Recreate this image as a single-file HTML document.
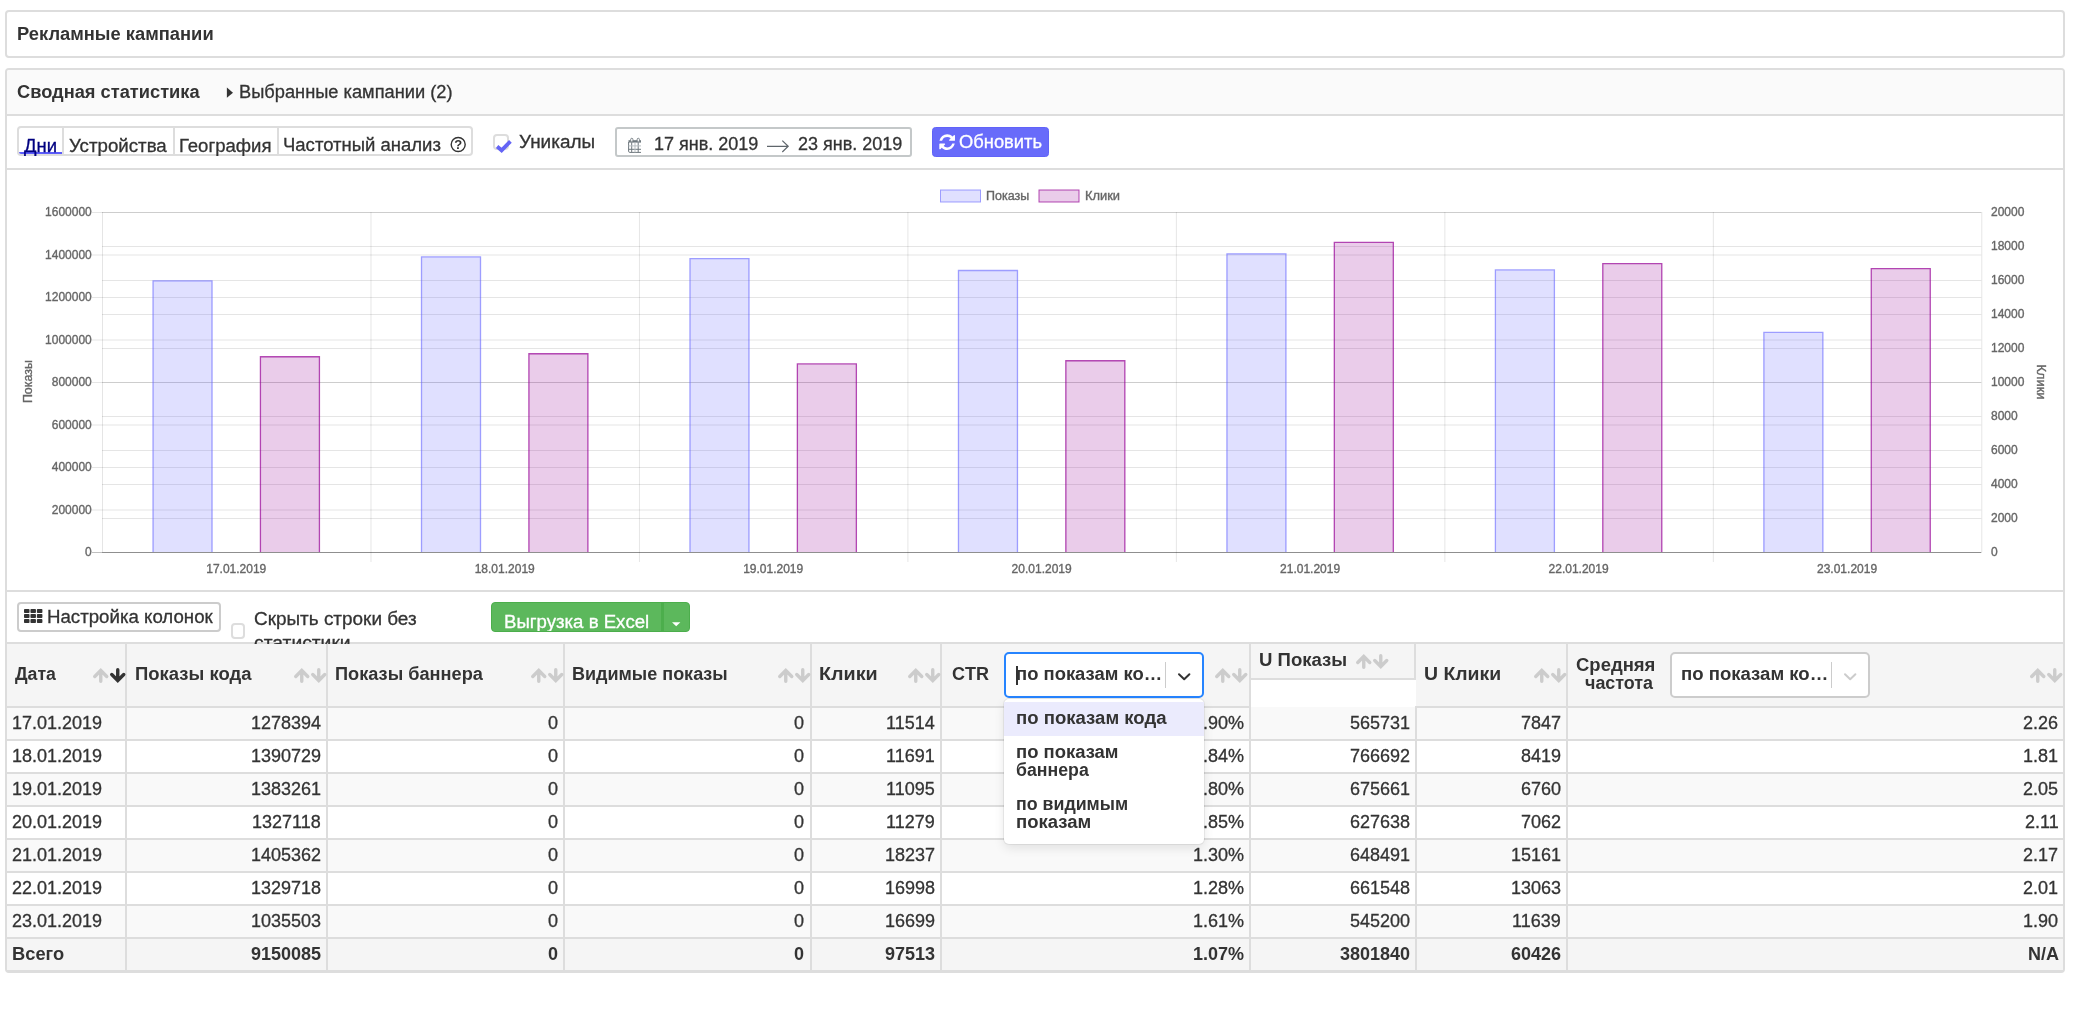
<!DOCTYPE html>
<html lang="ru">
<head>
<meta charset="utf-8">
<title>Рекламные кампании</title>
<style>
html,body{margin:0;padding:0;background:#fff;}
body{width:2080px;height:1024px;position:relative;overflow:hidden;font-family:"Liberation Sans", sans-serif;font-size:18px;color:#333;}
#page{position:absolute;left:0;top:0;width:2080px;height:1024px;overflow:hidden;will-change:transform;}
.b,.a{position:absolute;box-sizing:content-box;}
header,section,nav,figure,form{display:block;margin:0;padding:0;}
.t{position:absolute;white-space:nowrap;-webkit-text-stroke:0.3px;transform-origin:0 0;}
svg{display:block;overflow:visible;}
.ch text{stroke:#666;stroke-width:0.35px;}
</style>
</head>
<body>
<div id="page">
<header aria-label="Рекламные кампании">
<div class="b" style="left:5px;top:10px;width:2056px;height:44px;border:2px solid #ddd;border-radius:4px;background:#fff;"></div>
<span class="t" style="left:17.18px;top:25.00px;font-size:18px;line-height:18px;font-weight:bold;-webkit-text-stroke:0;transform:scaleX(1.0188);">Рекламные кампании</span>
</header>
<section aria-label="Сводная статистика">
<div class="b" style="left:5px;top:68px;width:2056px;height:901px;border:2px solid #ddd;border-radius:4px;background:#fff;"></div>
<div class="b" style="left:7px;top:70px;width:2056px;height:44px;background:#fafafa;border-bottom:2px solid #ddd;border-radius:2px 2px 0 0;"></div>
<span class="t" style="left:16.73px;top:82.50px;font-size:18px;line-height:18px;font-weight:bold;-webkit-text-stroke:0;transform:scaleX(1.0143);">Сводная статистика</span>
<svg class="a" style="left:226px;top:87px" width="8" height="12" viewBox="0 0 8 12"><path d="M0.9 0.6 L7 5.65 L0.9 10.7 Z" fill="#333"/></svg>
<span class="t" style="left:239.39px;top:83.00px;font-size:18px;line-height:18px;transform:scaleX(1.0142);">Выбранные кампании (2)</span>
<nav aria-label="Разрезы статистики">
<div class="b" style="left:7px;top:168px;width:2056px;height:2px;background:#ddd;"></div>
<div class="b" style="left:17px;top:126px;width:452px;height:26px;border:2px solid #ddd;border-radius:4px;"></div>
<div class="b" style="left:62px;top:128px;width:2px;height:26px;background:#ddd;"></div>
<div class="b" style="left:173px;top:128px;width:2px;height:26px;background:#ddd;"></div>
<div class="b" style="left:277px;top:128px;width:2px;height:26px;background:#ddd;"></div>
<div class="b" style="left:19px;top:152px;width:43px;height:2px;background:#5c5cfa;border-radius:0 0 0 2px;"></div>
<div class="b" style="left:17px;top:126px;width:456px;height:30px;overflow:hidden;"><span class="t" style="left:7.40px;top:11.00px;font-size:18px;line-height:18px;color:#000080;transform:scaleX(1.0253);">Дни</span></div>
<div class="b" style="left:17px;top:126px;width:456px;height:30px;overflow:hidden;"><span class="t" style="left:52.19px;top:11.00px;font-size:18px;line-height:18px;transform:scaleX(1.0382);">Устройства</span></div>
<div class="b" style="left:17px;top:126px;width:456px;height:30px;overflow:hidden;"><span class="t" style="left:161.97px;top:11.00px;font-size:18px;line-height:18px;transform:scaleX(1.0295);">География</span></div>
<div class="b" style="left:17px;top:126px;width:456px;height:30px;overflow:hidden;"><span class="t" style="left:265.72px;top:9.60px;font-size:18px;line-height:18px;transform:scaleX(1.0280);">Частотный анализ</span></div>
<svg class="a" style="left:450px;top:136px" width="17" height="17" viewBox="0 0 17 17"><circle cx="8.2" cy="8.5" r="7" fill="none" stroke="#333" stroke-width="1.4"/><text x="8.3" y="13.2" text-anchor="middle" font-family="Liberation Sans, sans-serif" font-weight="bold" font-size="13" fill="#333">?</text></svg>
</nav>
<form aria-label="Параметры">
<div class="b" style="left:493px;top:134px;width:11.5px;height:11.5px;border:2px solid #ddd;border-radius:4px;background:#fff;"></div>
<svg class="a" style="left:494.2px;top:137.5px" width="20" height="16" viewBox="0 0 20 16"><path d="M3.1 8.5 L7.6 12.3 L16.4 3.3" fill="none" stroke="#6464f5" stroke-width="3.8" stroke-linejoin="miter"/></svg>
<span class="t" style="left:519.18px;top:132.50px;font-size:18px;line-height:18px;transform:scaleX(1.0511);">Уникалы</span>
<div class="b" style="left:615px;top:127px;width:293px;height:26px;border:2px solid #c4c8c9;border-radius:3px;background:#fff;"></div>
<svg class="a" style="left:628px;top:138px" width="13" height="15" viewBox="0 0 13 15">
<path d="M0.5 2.2 H13 V4.6 H0.5 Z" fill="#6f787e"/>
<rect x="2.7" y="0.3" width="2.2" height="3.6" rx="1" fill="#fff" stroke="#6f787e" stroke-width="0.9"/>
<rect x="9.2" y="0.3" width="2.2" height="3.6" rx="1" fill="#fff" stroke="#6f787e" stroke-width="0.9"/>
<path d="M0.6 4 V13.2 Q0.6 14.4 1.8 14.4 H13 M3.7 4.6 V14.4 M10.2 4.6 V14.4 M0.6 11.3 H13" fill="none" stroke="#6f787e" stroke-width="1"/>
<path d="M7 4.6 V14.4 M0.6 7.9 H13" fill="none" stroke="#b9bfc3" stroke-width="1"/>
</svg>
<span class="t" style="left:654.00px;top:135.00px;font-size:18px;line-height:18px;">17 янв. 2019</span>
<svg class="a" style="left:766px;top:139px" width="24" height="14" viewBox="0 0 24 14"><path d="M1 7.3 H22 M16.3 1.6 L22.2 7.3 L16.3 13" fill="none" stroke="#5f666b" stroke-width="1.2"/></svg>
<span class="t" style="left:798.00px;top:135.00px;font-size:18px;line-height:18px;">23 янв. 2019</span>
<div class="b" style="left:932px;top:127px;width:115px;height:28px;border:1px solid #6063f8;border-radius:3.5px;background:#686bfa;"></div>
<svg class="a" style="left:937.9px;top:132.8px" width="18.3" height="18.3" viewBox="0 0 1792 1792"><path d="M1639 1056q0 5-1 7-64 268-268 434.500t-478 166.500q-146 0-282.500-55t-243.500-157l-129 129q-19 19-45 19t-45-19-19-45v-448q0-26 19-45t45-19h448q26 0 45 19t19 45-19 45l-137 137q71 66 161 102t187 36q134 0 250-65t186-179q11-17 53-117 8-23 30-23h192q13 0 22.500 9.500t9.500 22.500zm25-800v448q0 26-19 45t-45 19h-448q-26 0-45-19t-19-45 19-45l138-138q-148-137-349-137-134 0-250 65t-186 179q-11 17-53 117-8 23-30 23h-199q-13 0-22.500-9.500t-9.500-22.500v-7q65-268 270-434.500t480-166.500q146 0 284 55.500t245 156.500l130-129q19-19 45-19t45 19 19 45z" fill="#fff"/></svg>
<span class="t" style="left:959.10px;top:133.40px;font-size:18px;line-height:18px;color:#fff;transform:scaleX(1.0186);">Обновить</span>
</form>
<figure aria-label="График показов и кликов">
<svg class="a ch" style="left:7px;top:170px" width="2056" height="420" viewBox="7 170 2056 420" font-family="Liberation Sans, sans-serif" font-size="12" fill="#666">
<rect x="940.5" y="190" width="40" height="12" fill="rgba(102,102,255,0.2)" stroke="rgba(102,102,255,0.6)" stroke-width="1"/>
<text x="986" y="199.8" textLength="43.2" lengthAdjust="spacingAndGlyphs">Показы</text>
<rect x="1039" y="190" width="40" height="12" fill="rgba(150,0,150,0.2)" stroke="rgba(150,0,150,0.7)" stroke-width="1"/>
<text x="1085" y="199.8" textLength="35" lengthAdjust="spacingAndGlyphs">Клики</text>
<line x1="102.50" y1="212.0" x2="102.50" y2="552.0" stroke="rgba(0,0,0,0.1)"/>
<line x1="370.97" y1="212.0" x2="370.97" y2="562.0" stroke="rgba(0,0,0,0.1)"/>
<line x1="639.44" y1="212.0" x2="639.44" y2="562.0" stroke="rgba(0,0,0,0.1)"/>
<line x1="907.91" y1="212.0" x2="907.91" y2="562.0" stroke="rgba(0,0,0,0.1)"/>
<line x1="1176.39" y1="212.0" x2="1176.39" y2="562.0" stroke="rgba(0,0,0,0.1)"/>
<line x1="1444.86" y1="212.0" x2="1444.86" y2="562.0" stroke="rgba(0,0,0,0.1)"/>
<line x1="1713.33" y1="212.0" x2="1713.33" y2="562.0" stroke="rgba(0,0,0,0.1)"/>
<line x1="92.0" y1="212.50" x2="1981.3" y2="212.50" stroke="rgba(0,0,0,0.1)"/>
<text x="91.8" y="216.10" text-anchor="end">1600000</text>
<line x1="92.0" y1="255.00" x2="1981.3" y2="255.00" stroke="rgba(0,0,0,0.1)"/>
<text x="91.8" y="258.60" text-anchor="end">1400000</text>
<line x1="92.0" y1="297.50" x2="1981.3" y2="297.50" stroke="rgba(0,0,0,0.1)"/>
<text x="91.8" y="301.10" text-anchor="end">1200000</text>
<line x1="92.0" y1="340.00" x2="1981.3" y2="340.00" stroke="rgba(0,0,0,0.1)"/>
<text x="91.8" y="343.60" text-anchor="end">1000000</text>
<line x1="92.0" y1="382.50" x2="1981.3" y2="382.50" stroke="rgba(0,0,0,0.1)"/>
<text x="91.8" y="386.10" text-anchor="end">800000</text>
<line x1="92.0" y1="425.00" x2="1981.3" y2="425.00" stroke="rgba(0,0,0,0.1)"/>
<text x="91.8" y="428.60" text-anchor="end">600000</text>
<line x1="92.0" y1="467.50" x2="1981.3" y2="467.50" stroke="rgba(0,0,0,0.1)"/>
<text x="91.8" y="471.10" text-anchor="end">400000</text>
<line x1="92.0" y1="510.00" x2="1981.3" y2="510.00" stroke="rgba(0,0,0,0.1)"/>
<text x="91.8" y="513.60" text-anchor="end">200000</text>
<line x1="92.0" y1="552.50" x2="1981.3" y2="552.50" stroke="rgba(0,0,0,0.25)"/>
<text x="91.8" y="556.10" text-anchor="end">0</text>
<line x1="102.0" y1="212.50" x2="1981.3" y2="212.50" stroke="rgba(0,0,0,0.1)"/>
<text x="1991" y="216.10">20000</text>
<line x1="102.0" y1="246.50" x2="1981.3" y2="246.50" stroke="rgba(0,0,0,0.1)"/>
<text x="1991" y="250.10">18000</text>
<line x1="102.0" y1="280.50" x2="1981.3" y2="280.50" stroke="rgba(0,0,0,0.1)"/>
<text x="1991" y="284.10">16000</text>
<line x1="102.0" y1="314.50" x2="1981.3" y2="314.50" stroke="rgba(0,0,0,0.1)"/>
<text x="1991" y="318.10">14000</text>
<line x1="102.0" y1="348.50" x2="1981.3" y2="348.50" stroke="rgba(0,0,0,0.1)"/>
<text x="1991" y="352.10">12000</text>
<line x1="102.0" y1="382.50" x2="1981.3" y2="382.50" stroke="rgba(0,0,0,0.1)"/>
<text x="1991" y="386.10">10000</text>
<line x1="102.0" y1="416.50" x2="1981.3" y2="416.50" stroke="rgba(0,0,0,0.1)"/>
<text x="1991" y="420.10">8000</text>
<line x1="102.0" y1="450.50" x2="1981.3" y2="450.50" stroke="rgba(0,0,0,0.1)"/>
<text x="1991" y="454.10">6000</text>
<line x1="102.0" y1="484.50" x2="1981.3" y2="484.50" stroke="rgba(0,0,0,0.1)"/>
<text x="1991" y="488.10">4000</text>
<line x1="102.0" y1="518.50" x2="1981.3" y2="518.50" stroke="rgba(0,0,0,0.1)"/>
<text x="1991" y="522.10">2000</text>
<line x1="102.0" y1="552.50" x2="1981.3" y2="552.50" stroke="rgba(0,0,0,0.25)"/>
<text x="1991" y="556.10">0</text>
<line x1="1981.8" y1="212.0" x2="1981.8" y2="552.0" stroke="rgba(0,0,0,0.1)"/>
<path d="M153.04 552.0 V280.84 H212.04 V552.0" fill="rgba(102,102,255,0.2)" stroke="rgba(102,102,255,0.6)" stroke-width="1.3"/>
<path d="M260.43 552.0 V356.76 H319.43 V552.0" fill="rgba(150,0,150,0.2)" stroke="rgba(150,0,150,0.7)" stroke-width="1.3"/>
<text x="236.24" y="573" text-anchor="middle">17.01.2019</text>
<path d="M421.51 552.0 V256.97 H480.51 V552.0" fill="rgba(102,102,255,0.2)" stroke="rgba(102,102,255,0.6)" stroke-width="1.3"/>
<path d="M528.90 552.0 V353.75 H587.90 V552.0" fill="rgba(150,0,150,0.2)" stroke="rgba(150,0,150,0.7)" stroke-width="1.3"/>
<text x="504.71" y="573" text-anchor="middle">18.01.2019</text>
<path d="M689.98 552.0 V258.56 H748.98 V552.0" fill="rgba(102,102,255,0.2)" stroke="rgba(102,102,255,0.6)" stroke-width="1.3"/>
<path d="M797.37 552.0 V363.88 H856.37 V552.0" fill="rgba(150,0,150,0.2)" stroke="rgba(150,0,150,0.7)" stroke-width="1.3"/>
<text x="773.18" y="573" text-anchor="middle">19.01.2019</text>
<path d="M958.46 552.0 V270.49 H1017.46 V552.0" fill="rgba(102,102,255,0.2)" stroke="rgba(102,102,255,0.6)" stroke-width="1.3"/>
<path d="M1065.84 552.0 V360.76 H1124.84 V552.0" fill="rgba(150,0,150,0.2)" stroke="rgba(150,0,150,0.7)" stroke-width="1.3"/>
<text x="1041.65" y="573" text-anchor="middle">20.01.2019</text>
<path d="M1226.93 552.0 V253.86 H1285.93 V552.0" fill="rgba(102,102,255,0.2)" stroke="rgba(102,102,255,0.6)" stroke-width="1.3"/>
<path d="M1334.32 552.0 V242.47 H1393.32 V552.0" fill="rgba(150,0,150,0.2)" stroke="rgba(150,0,150,0.7)" stroke-width="1.3"/>
<text x="1310.12" y="573" text-anchor="middle">21.01.2019</text>
<path d="M1495.40 552.0 V269.93 H1554.40 V552.0" fill="rgba(102,102,255,0.2)" stroke="rgba(102,102,255,0.6)" stroke-width="1.3"/>
<path d="M1602.79 552.0 V263.53 H1661.79 V552.0" fill="rgba(150,0,150,0.2)" stroke="rgba(150,0,150,0.7)" stroke-width="1.3"/>
<text x="1578.59" y="573" text-anchor="middle">22.01.2019</text>
<path d="M1763.87 552.0 V332.46 H1822.87 V552.0" fill="rgba(102,102,255,0.2)" stroke="rgba(102,102,255,0.6)" stroke-width="1.3"/>
<path d="M1871.26 552.0 V268.62 H1930.26 V552.0" fill="rgba(150,0,150,0.2)" stroke="rgba(150,0,150,0.7)" stroke-width="1.3"/>
<text x="1847.06" y="573" text-anchor="middle">23.01.2019</text>
<text transform="translate(32.4 381.6) rotate(-90)" text-anchor="middle" textLength="43" lengthAdjust="spacingAndGlyphs">Показы</text>
<text transform="translate(2037.3 382) rotate(90)" text-anchor="middle" textLength="35" lengthAdjust="spacingAndGlyphs">Клики</text>
</svg>
</figure>
<div class="b" style="left:7px;top:590px;width:2056px;height:2px;background:#ddd;"></div>
<section aria-label="Инструменты таблицы">
<div class="b" style="left:17px;top:602px;width:200px;height:26px;border:2px solid #ccc;border-radius:4px;background:#fff;"></div>
<svg class="a" style="left:23.8px;top:609px" width="19" height="15" viewBox="0 0 19 15"><rect x="0.00" y="0.00" width="5.5" height="4.0" rx="0.8" fill="#333"/><rect x="6.45" y="0.00" width="5.5" height="4.0" rx="0.8" fill="#333"/><rect x="12.90" y="0.00" width="5.5" height="4.0" rx="0.8" fill="#333"/><rect x="0.00" y="5.05" width="5.5" height="4.0" rx="0.8" fill="#333"/><rect x="6.45" y="5.05" width="5.5" height="4.0" rx="0.8" fill="#333"/><rect x="12.90" y="5.05" width="5.5" height="4.0" rx="0.8" fill="#333"/><rect x="0.00" y="10.10" width="5.5" height="4.0" rx="0.8" fill="#333"/><rect x="6.45" y="10.10" width="5.5" height="4.0" rx="0.8" fill="#333"/><rect x="12.90" y="10.10" width="5.5" height="4.0" rx="0.8" fill="#333"/></svg>
<span class="t" style="left:47.16px;top:608.00px;font-size:18px;line-height:18px;transform:scaleX(1.0365);">Настройка колонок</span>
<div class="b" style="left:231px;top:623px;width:9.5px;height:11.5px;border:2px solid #ddd;border-radius:4px;background:#fff;"></div>
<span class="t" style="left:253.51px;top:609.50px;font-size:18px;line-height:18px;transform:scaleX(1.0519);">Скрыть строки без</span>
<div class="b" style="left:491px;top:602px;width:197px;height:28px;border:1px solid #4cae4c;border-radius:4px;background:#5cb85c;"></div>
<div class="b" style="left:661.2px;top:603px;width:2.4px;height:28px;background:#4cae4c;"></div>
<div class="b" style="left:492px;top:603px;width:170px;height:28px;overflow:hidden;"><span class="t" style="left:11.97px;top:9.75px;font-size:18px;line-height:18px;color:#fff;transform:scaleX(1.0341);">Выгрузка в Excel</span></div>
<svg class="a" style="left:671.8px;top:621.9px" width="9" height="5" viewBox="0 0 9 5"><path d="M0 0.2 H8.4 L4.2 4.3 Z" fill="#fff"/></svg>
</section>
<section aria-label="Таблица статистики по дням">
<div class="b" style="left:7px;top:642px;width:2056px;height:2px;background:#ddd;"></div>
<div class="b" style="left:7px;top:644px;width:2056px;height:62px;background:#f5f5f5;"></div>
<div class="b" style="left:250px;top:630px;width:200px;height:14px;overflow:hidden;"><span class="t" style="left:3.62px;top:4.00px;font-size:18px;line-height:18px;transform:scaleX(1.0710);">статистики</span></div>
<div class="b" style="left:7px;top:706px;width:2056px;height:2px;background:#ddd;"></div>
<div class="b" style="left:7px;top:708px;width:2056px;height:31px;background:#f9f9f9;"></div>
<div class="b" style="left:7px;top:739px;width:2056px;height:2px;background:#ddd;"></div>
<div class="b" style="left:7px;top:741px;width:2056px;height:31px;background:#fff;"></div>
<div class="b" style="left:7px;top:772px;width:2056px;height:2px;background:#ddd;"></div>
<div class="b" style="left:7px;top:774px;width:2056px;height:31px;background:#f9f9f9;"></div>
<div class="b" style="left:7px;top:805px;width:2056px;height:2px;background:#ddd;"></div>
<div class="b" style="left:7px;top:807px;width:2056px;height:31px;background:#fff;"></div>
<div class="b" style="left:7px;top:838px;width:2056px;height:2px;background:#ddd;"></div>
<div class="b" style="left:7px;top:840px;width:2056px;height:31px;background:#f9f9f9;"></div>
<div class="b" style="left:7px;top:871px;width:2056px;height:2px;background:#ddd;"></div>
<div class="b" style="left:7px;top:873px;width:2056px;height:31px;background:#fff;"></div>
<div class="b" style="left:7px;top:904px;width:2056px;height:2px;background:#ddd;"></div>
<div class="b" style="left:7px;top:906px;width:2056px;height:31px;background:#f9f9f9;"></div>
<div class="b" style="left:7px;top:937px;width:2056px;height:2px;background:#ddd;"></div>
<div class="b" style="left:7px;top:939px;width:2056px;height:31px;background:#f5f5f5;"></div>
<div class="b" style="left:7px;top:970px;width:2056px;height:1px;background:#ddd;"></div>
<div class="b" style="left:1251px;top:680px;width:165px;height:27px;background:#fff;"></div>
<div class="b" style="left:1251px;top:707px;width:164px;height:1px;background:#f9f9f9;"></div>
<div class="b" style="left:1251px;top:678px;width:165px;height:2px;background:#ddd;"></div>
<div class="b" style="left:125px;top:644px;width:2px;height:326px;background:#ddd;"></div>
<div class="b" style="left:326px;top:644px;width:2px;height:326px;background:#ddd;"></div>
<div class="b" style="left:563px;top:644px;width:2px;height:326px;background:#ddd;"></div>
<div class="b" style="left:810px;top:644px;width:2px;height:326px;background:#ddd;"></div>
<div class="b" style="left:940px;top:644px;width:2px;height:326px;background:#ddd;"></div>
<div class="b" style="left:1249px;top:644px;width:2px;height:326px;background:#ddd;"></div>
<div class="b" style="left:1566px;top:644px;width:2px;height:326px;background:#ddd;"></div>
<div class="b" style="left:1414px;top:644px;width:2px;height:36px;background:#ddd;"></div>
<div class="b" style="left:1415px;top:706px;width:2px;height:264px;background:#ddd;"></div>
<div class="b" style="left:1416px;top:680px;width:1px;height:26px;background:#f5f5f5;"></div>
<span class="t" style="left:15.00px;top:665.25px;font-size:18px;line-height:18px;font-weight:bold;-webkit-text-stroke:0;transform:scaleX(0.9821);">Дата</span>
<svg class="a" style="left:92.6px;top:668.2px" width="33" height="15" viewBox="0 0 33 15"><path d="M1.75 8.5 L7.75 2.5 L13.75 8.5 M7.75 3.6 V13.2" fill="none" stroke="#ccc" stroke-width="3.4" stroke-linecap="round" stroke-linejoin="miter"/><path d="M18.75 6.5 L24.75 12.5 L30.75 6.5 M24.75 11.4 V1.8" fill="none" stroke="#333" stroke-width="3.4" stroke-linecap="round" stroke-linejoin="miter"/></svg>
<span class="t" style="left:134.57px;top:665.25px;font-size:18px;line-height:18px;font-weight:bold;-webkit-text-stroke:0;transform:scaleX(1.0265);">Показы кода</span>
<svg class="a" style="left:293.6px;top:668.2px" width="33" height="15" viewBox="0 0 33 15"><path d="M1.75 8.5 L7.75 2.5 L13.75 8.5 M7.75 3.6 V13.2" fill="none" stroke="#ccc" stroke-width="3.4" stroke-linecap="round" stroke-linejoin="miter"/><path d="M18.75 6.5 L24.75 12.5 L30.75 6.5 M24.75 11.4 V1.8" fill="none" stroke="#ccc" stroke-width="3.4" stroke-linecap="round" stroke-linejoin="miter"/></svg>
<span class="t" style="left:335.24px;top:665.25px;font-size:18px;line-height:18px;font-weight:bold;-webkit-text-stroke:0;transform:scaleX(1.0101);">Показы баннера</span>
<svg class="a" style="left:530.6px;top:668.2px" width="33" height="15" viewBox="0 0 33 15"><path d="M1.75 8.5 L7.75 2.5 L13.75 8.5 M7.75 3.6 V13.2" fill="none" stroke="#ccc" stroke-width="3.4" stroke-linecap="round" stroke-linejoin="miter"/><path d="M18.75 6.5 L24.75 12.5 L30.75 6.5 M24.75 11.4 V1.8" fill="none" stroke="#ccc" stroke-width="3.4" stroke-linecap="round" stroke-linejoin="miter"/></svg>
<span class="t" style="left:572.00px;top:665.25px;font-size:18px;line-height:18px;font-weight:bold;-webkit-text-stroke:0;">Видимые показы</span>
<svg class="a" style="left:777.6px;top:668.2px" width="33" height="15" viewBox="0 0 33 15"><path d="M1.75 8.5 L7.75 2.5 L13.75 8.5 M7.75 3.6 V13.2" fill="none" stroke="#ccc" stroke-width="3.4" stroke-linecap="round" stroke-linejoin="miter"/><path d="M18.75 6.5 L24.75 12.5 L30.75 6.5 M24.75 11.4 V1.8" fill="none" stroke="#ccc" stroke-width="3.4" stroke-linecap="round" stroke-linejoin="miter"/></svg>
<span class="t" style="left:819.15px;top:665.25px;font-size:18px;line-height:18px;font-weight:bold;-webkit-text-stroke:0;transform:scaleX(1.0963);">Клики</span>
<svg class="a" style="left:907.6px;top:668.2px" width="33" height="15" viewBox="0 0 33 15"><path d="M1.75 8.5 L7.75 2.5 L13.75 8.5 M7.75 3.6 V13.2" fill="none" stroke="#ccc" stroke-width="3.4" stroke-linecap="round" stroke-linejoin="miter"/><path d="M18.75 6.5 L24.75 12.5 L30.75 6.5 M24.75 11.4 V1.8" fill="none" stroke="#ccc" stroke-width="3.4" stroke-linecap="round" stroke-linejoin="miter"/></svg>
<span class="t" style="left:952.00px;top:665.25px;font-size:18px;line-height:18px;font-weight:bold;-webkit-text-stroke:0;">CTR</span>
<svg class="a" style="left:1214.5px;top:668.2px" width="33" height="15" viewBox="0 0 33 15"><path d="M1.75 8.5 L7.75 2.5 L13.75 8.5 M7.75 3.6 V13.2" fill="none" stroke="#ccc" stroke-width="3.4" stroke-linecap="round" stroke-linejoin="miter"/><path d="M18.75 6.5 L24.75 12.5 L30.75 6.5 M24.75 11.4 V1.8" fill="none" stroke="#ccc" stroke-width="3.4" stroke-linecap="round" stroke-linejoin="miter"/></svg>
<span class="t" style="left:1258.57px;top:651.10px;font-size:18px;line-height:18px;font-weight:bold;-webkit-text-stroke:0;transform:scaleX(1.0312);">U Показы</span>
<svg class="a" style="left:1356.1px;top:654.2px" width="33" height="15" viewBox="0 0 33 15"><path d="M1.75 8.5 L7.75 2.5 L13.75 8.5 M7.75 3.6 V13.2" fill="none" stroke="#ccc" stroke-width="3.4" stroke-linecap="round" stroke-linejoin="miter"/><path d="M18.75 6.5 L24.75 12.5 L30.75 6.5 M24.75 11.4 V1.8" fill="none" stroke="#ccc" stroke-width="3.4" stroke-linecap="round" stroke-linejoin="miter"/></svg>
<span class="t" style="left:1423.52px;top:665.40px;font-size:18px;line-height:18px;font-weight:bold;-webkit-text-stroke:0;transform:scaleX(1.0792);">U Клики</span>
<svg class="a" style="left:1533.5px;top:668.2px" width="33" height="15" viewBox="0 0 33 15"><path d="M1.75 8.5 L7.75 2.5 L13.75 8.5 M7.75 3.6 V13.2" fill="none" stroke="#ccc" stroke-width="3.4" stroke-linecap="round" stroke-linejoin="miter"/><path d="M18.75 6.5 L24.75 12.5 L30.75 6.5 M24.75 11.4 V1.8" fill="none" stroke="#ccc" stroke-width="3.4" stroke-linecap="round" stroke-linejoin="miter"/></svg>
<span class="t" style="left:1575.72px;top:656.20px;font-size:18px;line-height:18px;font-weight:bold;-webkit-text-stroke:0;transform:scaleX(1.0267);">Средняя</span>
<span class="t" style="left:1585.17px;top:674.20px;font-size:18px;line-height:18px;font-weight:bold;-webkit-text-stroke:0;transform:scaleX(0.9940);">частота</span>
<svg class="a" style="left:2030.2px;top:668.2px" width="33" height="15" viewBox="0 0 33 15"><path d="M1.75 8.5 L7.75 2.5 L13.75 8.5 M7.75 3.6 V13.2" fill="none" stroke="#ccc" stroke-width="3.4" stroke-linecap="round" stroke-linejoin="miter"/><path d="M18.75 6.5 L24.75 12.5 L30.75 6.5 M24.75 11.4 V1.8" fill="none" stroke="#ccc" stroke-width="3.4" stroke-linecap="round" stroke-linejoin="miter"/></svg>
<div class="b" style="left:1670px;top:652px;width:196px;height:42px;border:2px solid #ccc;border-radius:5px;background:#fff;"></div>
<span class="t" style="left:1680.87px;top:664.80px;font-size:18px;line-height:18px;font-weight:bold;-webkit-text-stroke:0;transform:scaleX(1.0311);">по показам ко…</span>
<div class="b" style="left:1831px;top:662px;width:1px;height:26px;background:#ccc;"></div>
<svg class="a" style="left:1843px;top:672px" width="14" height="10" viewBox="0 0 14 10"><path d="M2 2.2 L7.2 7.2 L12.4 2.2" fill="none" stroke="#ccc" stroke-width="2" stroke-linecap="round" stroke-linejoin="round"/></svg>
<span class="t" style="left:12.00px;top:714.10px;font-size:18px;line-height:18px;">17.01.2019</span>
<span class="t" style="left:251.00px;top:714.10px;font-size:18px;line-height:18px;">1278394</span>
<span class="t" style="left:548.00px;top:714.10px;font-size:18px;line-height:18px;">0</span>
<span class="t" style="left:794.00px;top:714.10px;font-size:18px;line-height:18px;">0</span>
<span class="t" style="left:886.00px;top:714.10px;font-size:18px;line-height:18px;">11514</span>
<span class="t" style="left:1193.00px;top:714.10px;font-size:18px;line-height:18px;">0.90%</span>
<span class="t" style="left:1350.00px;top:714.10px;font-size:18px;line-height:18px;">565731</span>
<span class="t" style="left:1521.00px;top:714.10px;font-size:18px;line-height:18px;">7847</span>
<span class="t" style="left:2023.00px;top:714.10px;font-size:18px;line-height:18px;">2.26</span>
<span class="t" style="left:12.00px;top:747.10px;font-size:18px;line-height:18px;">18.01.2019</span>
<span class="t" style="left:251.00px;top:747.10px;font-size:18px;line-height:18px;">1390729</span>
<span class="t" style="left:548.00px;top:747.10px;font-size:18px;line-height:18px;">0</span>
<span class="t" style="left:794.00px;top:747.10px;font-size:18px;line-height:18px;">0</span>
<span class="t" style="left:886.00px;top:747.10px;font-size:18px;line-height:18px;">11691</span>
<span class="t" style="left:1193.00px;top:747.10px;font-size:18px;line-height:18px;">0.84%</span>
<span class="t" style="left:1350.00px;top:747.10px;font-size:18px;line-height:18px;">766692</span>
<span class="t" style="left:1521.00px;top:747.10px;font-size:18px;line-height:18px;">8419</span>
<span class="t" style="left:2023.00px;top:747.10px;font-size:18px;line-height:18px;">1.81</span>
<span class="t" style="left:12.00px;top:780.10px;font-size:18px;line-height:18px;">19.01.2019</span>
<span class="t" style="left:251.00px;top:780.10px;font-size:18px;line-height:18px;">1383261</span>
<span class="t" style="left:548.00px;top:780.10px;font-size:18px;line-height:18px;">0</span>
<span class="t" style="left:794.00px;top:780.10px;font-size:18px;line-height:18px;">0</span>
<span class="t" style="left:886.00px;top:780.10px;font-size:18px;line-height:18px;">11095</span>
<span class="t" style="left:1193.00px;top:780.10px;font-size:18px;line-height:18px;">0.80%</span>
<span class="t" style="left:1350.00px;top:780.10px;font-size:18px;line-height:18px;">675661</span>
<span class="t" style="left:1521.00px;top:780.10px;font-size:18px;line-height:18px;">6760</span>
<span class="t" style="left:2023.00px;top:780.10px;font-size:18px;line-height:18px;">2.05</span>
<span class="t" style="left:12.00px;top:813.10px;font-size:18px;line-height:18px;">20.01.2019</span>
<span class="t" style="left:252.00px;top:813.10px;font-size:18px;line-height:18px;">1327118</span>
<span class="t" style="left:548.00px;top:813.10px;font-size:18px;line-height:18px;">0</span>
<span class="t" style="left:794.00px;top:813.10px;font-size:18px;line-height:18px;">0</span>
<span class="t" style="left:886.00px;top:813.10px;font-size:18px;line-height:18px;">11279</span>
<span class="t" style="left:1193.00px;top:813.10px;font-size:18px;line-height:18px;">0.85%</span>
<span class="t" style="left:1350.00px;top:813.10px;font-size:18px;line-height:18px;">627638</span>
<span class="t" style="left:1521.00px;top:813.10px;font-size:18px;line-height:18px;">7062</span>
<span class="t" style="left:2025.00px;top:813.10px;font-size:18px;line-height:18px;">2.11</span>
<span class="t" style="left:12.00px;top:846.10px;font-size:18px;line-height:18px;">21.01.2019</span>
<span class="t" style="left:251.00px;top:846.10px;font-size:18px;line-height:18px;">1405362</span>
<span class="t" style="left:548.00px;top:846.10px;font-size:18px;line-height:18px;">0</span>
<span class="t" style="left:794.00px;top:846.10px;font-size:18px;line-height:18px;">0</span>
<span class="t" style="left:885.00px;top:846.10px;font-size:18px;line-height:18px;">18237</span>
<span class="t" style="left:1193.00px;top:846.10px;font-size:18px;line-height:18px;">1.30%</span>
<span class="t" style="left:1350.00px;top:846.10px;font-size:18px;line-height:18px;">648491</span>
<span class="t" style="left:1511.00px;top:846.10px;font-size:18px;line-height:18px;">15161</span>
<span class="t" style="left:2023.00px;top:846.10px;font-size:18px;line-height:18px;">2.17</span>
<span class="t" style="left:12.00px;top:879.10px;font-size:18px;line-height:18px;">22.01.2019</span>
<span class="t" style="left:251.00px;top:879.10px;font-size:18px;line-height:18px;">1329718</span>
<span class="t" style="left:548.00px;top:879.10px;font-size:18px;line-height:18px;">0</span>
<span class="t" style="left:794.00px;top:879.10px;font-size:18px;line-height:18px;">0</span>
<span class="t" style="left:885.00px;top:879.10px;font-size:18px;line-height:18px;">16998</span>
<span class="t" style="left:1193.00px;top:879.10px;font-size:18px;line-height:18px;">1.28%</span>
<span class="t" style="left:1350.00px;top:879.10px;font-size:18px;line-height:18px;">661548</span>
<span class="t" style="left:1511.00px;top:879.10px;font-size:18px;line-height:18px;">13063</span>
<span class="t" style="left:2023.00px;top:879.10px;font-size:18px;line-height:18px;">2.01</span>
<span class="t" style="left:12.00px;top:912.10px;font-size:18px;line-height:18px;">23.01.2019</span>
<span class="t" style="left:251.00px;top:912.10px;font-size:18px;line-height:18px;">1035503</span>
<span class="t" style="left:548.00px;top:912.10px;font-size:18px;line-height:18px;">0</span>
<span class="t" style="left:794.00px;top:912.10px;font-size:18px;line-height:18px;">0</span>
<span class="t" style="left:885.00px;top:912.10px;font-size:18px;line-height:18px;">16699</span>
<span class="t" style="left:1193.00px;top:912.10px;font-size:18px;line-height:18px;">1.61%</span>
<span class="t" style="left:1350.00px;top:912.10px;font-size:18px;line-height:18px;">545200</span>
<span class="t" style="left:1512.00px;top:912.10px;font-size:18px;line-height:18px;">11639</span>
<span class="t" style="left:2023.00px;top:912.10px;font-size:18px;line-height:18px;">1.90</span>
<span class="t" style="left:11.88px;top:945.00px;font-size:18px;line-height:18px;font-weight:bold;-webkit-text-stroke:0;transform:scaleX(1.0160);">Всего</span>
<span class="t" style="left:251.00px;top:945.00px;font-size:18px;line-height:18px;font-weight:bold;-webkit-text-stroke:0;">9150085</span>
<span class="t" style="left:548.00px;top:945.00px;font-size:18px;line-height:18px;font-weight:bold;-webkit-text-stroke:0;">0</span>
<span class="t" style="left:794.00px;top:945.00px;font-size:18px;line-height:18px;font-weight:bold;-webkit-text-stroke:0;">0</span>
<span class="t" style="left:885.00px;top:945.00px;font-size:18px;line-height:18px;font-weight:bold;-webkit-text-stroke:0;">97513</span>
<span class="t" style="left:1193.00px;top:945.00px;font-size:18px;line-height:18px;font-weight:bold;-webkit-text-stroke:0;">1.07%</span>
<span class="t" style="left:1340.00px;top:945.00px;font-size:18px;line-height:18px;font-weight:bold;-webkit-text-stroke:0;">3801840</span>
<span class="t" style="left:1511.00px;top:945.00px;font-size:18px;line-height:18px;font-weight:bold;-webkit-text-stroke:0;">60426</span>
<span class="t" style="left:2028.00px;top:945.00px;font-size:18px;line-height:18px;font-weight:bold;-webkit-text-stroke:0;">N/A</span>
</section>
<section aria-label="CTR: выбор базы расчёта">
<div class="b" style="left:1004px;top:652px;width:196px;height:42px;border:2px solid #2684ff;border-radius:5px;background:#fff;"></div>
<div class="b" style="left:1015.6px;top:665.5px;width:2.2px;height:19.5px;background:#333;"></div>
<span class="t" style="left:1016.48px;top:664.70px;font-size:18px;line-height:18px;font-weight:bold;-webkit-text-stroke:0;transform:scaleX(1.0236);">по показам ко…</span>
<div class="b" style="left:1165px;top:662px;width:1px;height:26px;background:#ccc;"></div>
<svg class="a" style="left:1177px;top:672px" width="14" height="10" viewBox="0 0 14 10"><path d="M2 2.2 L7.2 7.2 L12.4 2.2" fill="none" stroke="#333" stroke-width="2" stroke-linecap="round" stroke-linejoin="round"/></svg>
<div class="b" style="left:1004px;top:699px;width:200px;height:144.5px;background:#fff;border-radius:5px;box-shadow:0 0 0 1px rgba(0,0,0,0.06),0 4px 11px rgba(0,0,0,0.1);"></div>
<div class="b" style="left:1004px;top:702px;width:200px;height:34px;background:#ebebfd;"></div>
<span class="t" style="left:1016.27px;top:708.75px;font-size:18px;line-height:18px;font-weight:bold;-webkit-text-stroke:0;transform:scaleX(1.0311);">по показам кода</span>
<span class="t" style="left:1016.27px;top:742.50px;font-size:18px;line-height:18px;font-weight:bold;-webkit-text-stroke:0;transform:scaleX(1.0250);">по показам</span>
<span class="t" style="left:1016.47px;top:760.60px;font-size:18px;line-height:18px;font-weight:bold;-webkit-text-stroke:0;transform:scaleX(0.9843);">баннера</span>
<span class="t" style="left:1016.31px;top:795.00px;font-size:18px;line-height:18px;font-weight:bold;-webkit-text-stroke:0;transform:scaleX(0.9878);">по видимым</span>
<span class="t" style="left:1016.27px;top:813.00px;font-size:18px;line-height:18px;font-weight:bold;-webkit-text-stroke:0;transform:scaleX(1.0282);">показам</span>
</section>
</section>
</div>
</body>
</html>
